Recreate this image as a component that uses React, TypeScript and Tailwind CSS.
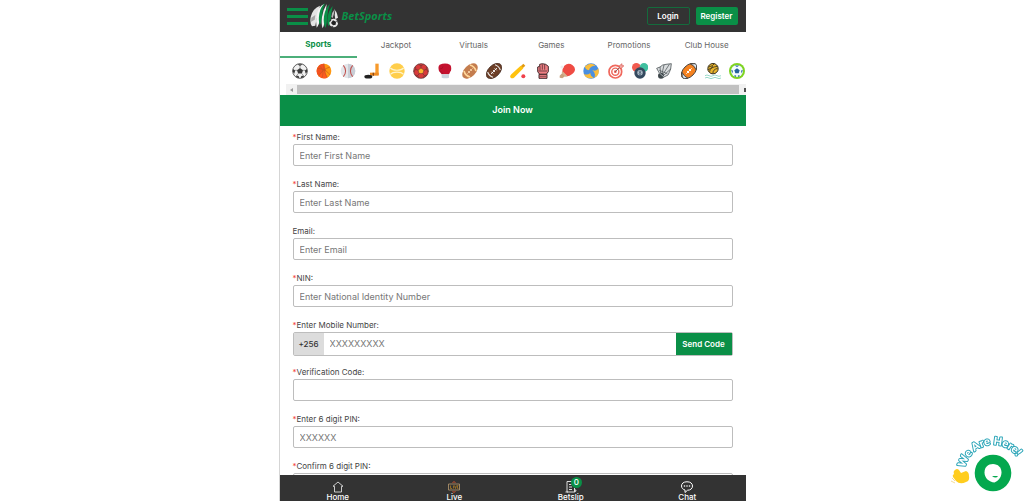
import type { ReactNode } from 'react'

const tabs = ['Sports', 'Jackpot', 'Virtuals', 'Games', 'Promotions', 'Club House']

const sports: { name: string; icon: ReactNode }[] = [
  {
    name: 'Soccer',
    icon: (
      <>
        <circle cx="12" cy="12" r="11" fill="#f1f1f1" stroke="#555" strokeWidth="1.4" />
        <path d="M12 7.5l4.5 3.2-1.7 5.1H9.2l-1.7-5.1z" fill="#3a3a3a" />
        <path d="M8 1.8h8l-4 2.8zM1.4 9l3.4 2.2L3.4 16 1.2 13zM22.6 9l-3.4 2.2 1.4 4.8 2.2-3zM6 18.6l4 .8.8 3.4-4.2-1.6zM18 18.6l-4 .8-.8 3.4 4.2-1.6z" fill="#3a3a3a" />
        <path d="M12 4v4M4.5 11l3.2 0M19.5 11h-3.2M9.2 15.8L7.2 19M14.8 15.8l2 3.2" stroke="#777" strokeWidth="1" />
      </>
    ),
  },
  {
    name: 'Basketball',
    icon: (
      <>
        <circle cx="12" cy="12" r="11" fill="#ff9811" />
        <path d="M12 1a11 11 0 0 0-8 18.6L15 12z" fill="#f4511e" />
        <path d="M4 19.6A11 11 0 0 0 17 22L13 11z" fill="#ff5a1f" />
        <path d="M2 8c8 0 15 4 19 10M12 1c-1 8 1 15 5 21M21 6C14 8 7 13 4 20M5 4c5 4 7 10 4 18" fill="none" stroke="#c2571f" strokeWidth="1" />
      </>
    ),
  },
  {
    name: 'Baseball',
    icon: (
      <>
        <circle cx="12" cy="12" r="11" fill="#e4e6ea" />
        <path d="M12 1a11 11 0 0 1 0 22z" fill="#c9ced6" />
        <path d="M5 3.5c4.5 5 4.5 12 0 17M19 3.5c-4.5 5-4.5 12 0 17" fill="none" stroke="#c0504d" strokeWidth="1.6" />
      </>
    ),
  },
  {
    name: 'Ice Hockey',
    icon: (
      <>
        <path d="M17 1h5v17h-5z" fill="#f79a2b" />
        <path d="M9 14.5h13v4.5H9z" fill="#f08c22" />
        <path d="M13 14.5h2v4.5h-2z" fill="#8a4b1c" />
        <ellipse cx="6.5" cy="20.5" rx="6" ry="2.8" fill="#222" />
      </>
    ),
  },
  {
    name: 'Tennis',
    icon: (
      <>
        <circle cx="12" cy="12" r="11.5" fill="#ffce4b" />
        <path d="M2 7.5c4 4.5 16 4.5 20 0M2 17c4-4.5 16-4.5 20 0" fill="none" stroke="#fff3c9" strokeWidth="1.8" />
      </>
    ),
  },
  {
    name: 'Handball',
    icon: (
      <>
        <circle cx="12" cy="12" r="11" fill="#d93a3a" stroke="#6b3434" strokeWidth="1.2" />
        <path d="M12 7.5l4.5 3.3-1.7 5H9.2l-1.7-5z" fill="#ffb52e" stroke="#6b3434" strokeWidth=".8" />
        <path d="M12 8V4L8 2M12 4l4-2M16 11l4-1.5V6M20 9.5l3 4M14.5 15.6L17 19l4-1M17 19l-2 4M9.5 15.6L7 19l-4-1M7 19l2 4M8 11L4 9.5V6M4 9.5l-3 4" fill="none" stroke="#6b3434" strokeWidth="1" />
      </>
    ),
  },
  {
    name: 'Boxing',
    icon: (
      <>
        <path d="M4 2.5Q13-1 20 3q2 3 1 8l-3 6H7L3 12Q1 5 4 2.5z" fill="#c4122f" />
        <path d="M4 9q5 0 5-4M9 17q-1-4-5-5" fill="none" stroke="#9e0f28" strokeWidth="1" />
        <path d="M7 17h11v5q-5 2-11 0z" fill="#ccd3dd" />
      </>
    ),
  },
  {
    name: 'Rugby',
    icon: (
      <>
        <ellipse cx="12" cy="12" rx="14" ry="8.5" transform="rotate(-45 12 12)" fill="#c47d4e" />
        <path d="M3 12q2 7 9 9M12 3q7 2 9 9" fill="none" stroke="#ffd79a" strokeWidth="2.6" />
        <path d="M8 16l8-8M9 12l3 3M12 9l3 3" stroke="#f6d3a8" strokeWidth="1.3" />
      </>
    ),
  },
  {
    name: 'American Football',
    icon: (
      <>
        <ellipse cx="12" cy="12" rx="14" ry="8.5" transform="rotate(-45 12 12)" fill="#6d3f27" stroke="#3b2419" />
        <path d="M2.5 13.5q2 6 8 8M13.5 2.5q6 2 8 8" fill="none" stroke="#eee" strokeWidth="1.6" />
        <path d="M7.5 16.5l9-9M8 13l3 3M10.5 10.5l3 3M13 8l3 3" stroke="#fff" strokeWidth="1.3" />
      </>
    ),
  },
  {
    name: 'Cricket',
    icon: (
      <>
        <path d="M20 1l3 3-4 4-3-3z" fill="#e39b12" />
        <path d="M16 4l4 4L6 22q-3 2-5 0t1-5z" fill="#ffc20e" />
        <circle cx="20" cy="20" r="3" fill="#f0414b" />
      </>
    ),
  },
  {
    name: 'Martial Arts',
    icon: (
      <>
        <path d="M4 6l3-1V2l4-1 5 1 4 3v8l-3 4H7l-3-4z" fill="#ee7f84" stroke="#3b2226" strokeWidth="1.4" />
        <path d="M7.5 5v6M11 2v8M14.5 2v8M5 12h13" stroke="#3b2226" strokeWidth="1" />
        <path d="M6 17h12v6H6z" fill="#ee7f84" stroke="#3b2226" strokeWidth="1.4" />
        <path d="M7 20h10" stroke="#3b2226" strokeWidth=".8" />
      </>
    ),
  },
  {
    name: 'Table Tennis',
    icon: (
      <>
        <path d="M5 15l5 4-5 4-4-1v-3z" fill="#c9a27e" />
        <path d="M8 4Q14-1 20 3t3 10q-3 5-11 7l-7-7Q5 8 8 4z" fill="#ef4b43" />
        <path d="M5 12l8 8-3 1-6-6z" fill="#d5b18e" />
        <circle cx="4.5" cy="6" r="2.3" fill="#eee" />
      </>
    ),
  },
  {
    name: 'Volleyball',
    icon: (
      <>
        <circle cx="12" cy="12" r="11.5" fill="#4a8fe0" />
        <path d="M3 5Q11-2 19 4q-9 0-10 7-6-1-6-6zM23 8q3 10-6 14 3-7-3-11 7 2 9-3zM1 16q5 3 10-1 0 5 5 7Q5 25 1 16z" fill="#f9bd3c" />
      </>
    ),
  },
  {
    name: 'Darts',
    icon: (
      <>
        <circle cx="11" cy="13" r="9.5" fill="#fff" stroke="#f0685d" strokeWidth="2.6" />
        <circle cx="11" cy="13" r="5.3" fill="#fff" stroke="#f0685d" strokeWidth="2.2" />
        <circle cx="11" cy="13" r="2" fill="#ee5a4f" />
        <path d="M11 13l8-8" stroke="#555" strokeWidth="1.2" />
        <path d="M17 4l4-3v3h3l-4 4h-3z" fill="#f3a39d" stroke="#d2463c" strokeWidth=".8" />
      </>
    ),
  },
  {
    name: 'Pool',
    icon: (
      <>
        <circle cx="6.5" cy="6.5" r="6.5" fill="#f15b50" />
        <circle cx="18" cy="6.5" r="6.5" fill="#40c0a0" />
        <circle cx="12" cy="15" r="8.5" fill="#34495e" />
        <circle cx="12" cy="14.5" r="4" fill="#b9c6d2" />
        <circle cx="12" cy="13" r="1.3" fill="none" stroke="#34495e" />
        <circle cx="12" cy="16" r="1.5" fill="none" stroke="#34495e" />
      </>
    ),
  },
  {
    name: 'Badminton',
    icon: (
      <>
        <path d="M5 15L1 8l5-2 4-3 5-1 8-1-1 8-2 5-2 4-8 4z" fill="#dadddf" stroke="#4b5356" strokeWidth="1.2" />
        <path d="M7 17L6 6M9 16l3-13M11 16l9-14M12 18l10-9M5 11l12 5" stroke="#4b5356" strokeWidth="1.1" />
        <circle cx="7.5" cy="19" r="4.5" fill="#3f484c" />
        <path d="M4 14l8 7" stroke="#aab2b5" strokeWidth="1.5" />
      </>
    ),
  },
  {
    name: 'Rugby League',
    icon: (
      <>
        <ellipse cx="12" cy="12" rx="14" ry="8.5" transform="rotate(-45 12 12)" fill="#f58220" stroke="#3b3b3b" strokeWidth="1.3" />
        <path d="M1.5 14q3 6 8.5 8.5l-5 1-3-2zM14 1.5q6 2 8.5 8.5l1-6-2-3z" fill="#d8e4ee" stroke="#3b3b3b" strokeWidth="1.2" />
        <path d="M8 16l8-8M9 12l3 3M12 9l3 3" stroke="#fff" strokeWidth="1.5" />
      </>
    ),
  },
  {
    name: 'Water Polo',
    icon: (
      <>
        <circle cx="12" cy="8.5" r="7.8" fill="#e9b52c" stroke="#3a3420" strokeWidth="1.5" />
        <path d="M5 6q7-1 9-5M7 13q0-7 12-8M12 16q-1-6 7-8M4 10q5-1 8-5" fill="none" stroke="#3a3420" strokeWidth="1.3" />
        <path d="M0 19q3-2 6 0t6 0 6 0 6 0M0 22.5q3-2 6 0t6 0 6 0 6 0" fill="none" stroke="#9adbc9" strokeWidth="1.5" />
      </>
    ),
  },
  {
    name: 'Futsal',
    icon: (
      <>
        <circle cx="12" cy="12" r="12" fill="#7ed321" />
        <circle cx="12" cy="12" r="9" fill="#f3fbff" />
        <path d="M12 8l4 2.8-1.5 4.7h-5L8 10.8z" fill="#24639c" />
        <path d="M8.5 3.6h7L12 6zM3.3 10L6 11.8l-1.2 4zM20.7 10L18 11.8l1.2 4zM7 19.3l3.6-.8V21zM17 19.3l-3.6-.8V21z" fill="#24639c" />
      </>
    ),
  },
]

function Logo() {
  return (
    <svg viewBox="0 0 84 78" className="h-[26px] w-7" aria-hidden="true">
      <path d="M30 8Q8 16 2 42q-3 20 4 28l10-2 3-16 5-20z" fill="#e4e4e4" />
      <path d="M4 44l12-8-2 14-11 6z" fill="#a5a5a5" />
      <path d="M42 3Q26 10 21 32t-1 42q8-8 10-28T42 3z" fill="#f4f4f4" />
      <path d="M45 1Q32 10 28 32t2 34q4-6 6-28T45 1z" fill="#0a8f47" />
      <path d="M50 3Q39 20 36 42t2 34q6-12 8-34T50 3z" fill="#eee" />
      <path d="M59 3Q45 18 42 40t5 35q4-14 5-34t7-38z" fill="#0a8f47" />
      <path d="M68 9Q56 22 53 42t4 28q5-12 6-28t5-33z" fill="#0a8f47" />
      <path d="M75 17Q65 28 64 42l4 3q4-12 7-28z" fill="#bbb" />
      <path d="M76 22q6 8 8 22l-8 5q-4-12 0-27z" fill="#e8e8e8" />
      <circle cx="71" cy="60" r="13" fill="#e6e6e6" />
      <path d="M69 52l9 4-1 9-8 2-6-7zM81 50l3 9-5-3zM60 69l9 1 1 3zM58 54l4-4 2 2-5 6z" fill="#222" />
    </svg>
  )
}

function Field({ id, label, placeholder, required = true, type = 'text' }: {
  id: string
  label: string
  placeholder?: string
  required?: boolean
  type?: string
}) {
  return (
    <div className="mb-[11px]">
      <FieldLabel id={id} label={label} required={required} />
      <input
        id={id}
        type={type}
        placeholder={placeholder}
        className="block h-[22px] w-full rounded-xs border border-[#bdbdbd] bg-white px-1.5 text-[9px] text-[#444] placeholder:text-[#777]"
      />
    </div>
  )
}

function FieldLabel({ id, label, required = true }: { id: string; label: string; required?: boolean }) {
  return (
    <label htmlFor={id} className="block text-[8px] leading-[14px] text-[#444]">
      {required && <span className="text-[#f44336]">*</span>}
      {label}
    </label>
  )
}

const navItems: { name: string; icon: ReactNode }[] = [
  {
    name: 'Home',
    icon: <path d="M2 10.5L12 2l10 8.5h-3V22H5V10.5z" fill="none" stroke="#ddd" strokeWidth="1.8" strokeLinejoin="round" />,
  },
  {
    name: 'Live',
    icon: (
      <>
        <path d="M1 6h22v12H1z" fill="none" stroke="#b99a70" strokeWidth="1.6" />
        <path d="M5 9v6h3M11 9v6M13 9l2 6 2-6M21 9h-2v6h2" fill="none" stroke="#c58a21" strokeWidth="1.3" />
        <path d="M9 3q3-3 6 0M9 21q3 3 6 0" fill="none" stroke="#d0502c" strokeWidth="2" />
      </>
    ),
  },
  {
    name: 'Betslip',
    icon: (
      <path d="M14 1H4v21h15v-8M19 22q3 0 3-4h-4M1 22h5M8 7h5M8 12h6M8 17h6" fill="none" stroke="#ddd" strokeWidth="2" />
    ),
  },
  {
    name: 'Chat',
    icon: (
      <>
        <path d="M12 1.5c7 0 11 3.5 11 8.5s-4 8.500-10 8.500L8 23v-5C4 17 1 14 1 10c0-5 4-8.500 11-8.500z" fill="none" stroke="#fff" strokeWidth="2" />
        <circle cx="7" cy="10" r="1.6" fill="#fff" />
        <circle cx="12" cy="10" r="1.6" fill="#fff" />
        <circle cx="17" cy="10" r="1.6" fill="#fff" />
      </>
    ),
  },
]

function ChatWidget() {
  return (
    <button type="button" aria-label="Open chat" className="fixed right-0 bottom-0 h-[76px] w-[84px]">
      <svg viewBox="0 0 84 76" className="h-full w-full">
        <path id="greeting" d="M25 43A29 29 0 0 1 79 35" fill="none" />
        <text fontFamily="Lato, sans-serif" fontSize="11" fontWeight="900" fill="#fff" stroke="#2ba5b8" strokeWidth="2" strokeLinejoin="round" paintOrder="stroke">
          <textPath href="#greeting">We Are Here!</textPath>
        </text>
        <path d="M15 45q2-2 4 0l2 3 5-2q3 1 3 5 1 5-3 6-6 3-10-1l-3-4q-1-2 1-3-1-3 1-4z" fill="#ffcd1f" />
        <path d="M12 53l3 3M11 56l4 2" stroke="#f5dc9a" strokeWidth="1" />
        <circle cx="53" cy="48" r="18.3" fill="#04a84e" />
        <path d="M53 39c5 0 8.5 3.5 8.5 8.5S58 56 54.5 57.5C49 57 44.5 53 44.5 47.5S48 39 53 39z" fill="#fff" />
        <path d="M52 51h6q-2 3-6 0z" fill="#04a84e" />
      </svg>
    </button>
  )
}

export default function App() {
  return (
    <div className="h-screen overflow-hidden bg-white font-['Inter',sans-serif]">
      <div className="mx-auto flex h-full max-w-[467px] flex-col border-l border-[#d5d5d5]">
        <header className="flex h-8 shrink-0 items-center bg-[#333] pr-2 pl-[7px]">
          <button type="button" aria-label="Menu" className="flex w-[21px] flex-col gap-1">
            <span className="h-[3px] bg-[#0a8f47]" />
            <span className="h-[3px] bg-[#0a8f47]" />
            <span className="h-[3px] bg-[#0a8f47]" />
          </button>
          <a href="#" className="ml-0.5 flex items-center gap-1 font-['Open_Sans',sans-serif] text-[11px] font-bold text-[#0a8f47] italic">
            <Logo />
            BetSports
          </a>
          <div className="ml-auto flex gap-1.5 text-[8px] font-semibold text-white">
            <button type="button" className="h-[18px] w-[43px] rounded-xs border border-[#146b3c]">Login</button>
            <button type="button" className="h-[18px] w-[42px] rounded-xs bg-[#0a8f47]">Register</button>
          </div>
        </header>

        <nav className="grid h-[25px] shrink-0 grid-cols-6 text-center text-[8px] text-[#666]">
          {tabs.map((tab, i) => (
            <a
              key={tab}
              href="#"
              className={i === 0 ? 'border-b-2 border-b-[#4caf7a] leading-6 font-bold text-[#0a8f47]' : 'leading-[26px]'}
            >
              {tab}
            </a>
          ))}
        </nav>

        <div className="flex h-[27px] shrink-0 items-center justify-between pl-3">
          {sports.map((sport) => (
            <a key={sport.name} href="#" aria-label={sport.name}>
              <svg viewBox="0 0 24 24" className="h-4 w-4" fill="none">{sport.icon}</svg>
            </a>
          ))}
        </div>

        <div className="ml-1.5 flex h-[11px] shrink-0 items-center bg-[#f1f1f1]">
          <svg viewBox="0 0 11 10" className="h-[10px] w-[11px]"><path d="M7 3v4L4 5z" fill="#999" /></svg>
          <div className="h-[9px] flex-1 bg-[#c1c1c1]" />
          <svg viewBox="0 0 7 10" className="h-[10px] w-[7px]"><path d="M5 3v4h2V3z" fill="#505050" /></svg>
        </div>

        <h1 className="h-[31px] shrink-0 bg-[#0a8f47] text-center text-[9px] leading-[30px] font-semibold text-white">Join Now</h1>

        <form className="min-h-0 flex-1 overflow-hidden px-[13px] pt-1">
          <Field id="first" label="First Name:" placeholder="Enter First Name" />
          <Field id="last" label="Last Name:" placeholder="Enter Last Name" />
          <Field id="email" label="Email:" placeholder="Enter Email" required={false} type="email" />
          <Field id="nin" label="NIN:" placeholder="Enter National Identity Number" />
          <div className="mb-[9px]">
            <FieldLabel id="mobile" label="Enter Mobile Number:" />
            <div className="flex h-6 rounded-xs border border-[#bdbdbd]">
              <span className="w-[30px] bg-[#dcdcdc] text-center text-[8px] leading-[22px] font-medium text-[#333]">+256</span>
              <input id="mobile" type="tel" placeholder="XXXXXXXXX" className="min-w-0 flex-1 px-1.5 text-[9px] placeholder:text-[#777]" />
              <button type="button" className="w-14 bg-[#0a8f47] text-[8px] font-semibold text-white">Send Code</button>
            </div>
          </div>
          <Field id="code" label="Verification Code:" />
          <Field id="pin" label="Enter 6 digit PIN:" placeholder="XXXXXX" type="password" />
          <Field id="confirm" label="Confirm 6 digit PIN:" placeholder="XXXXXX" type="password" />
        </form>

        <nav className="grid h-[26px] shrink-0 grid-cols-4 bg-[#333] text-[8px] font-medium text-white">
          {navItems.map((item) => (
            <a key={item.name} href="#" className="flex flex-col items-center pt-1.5">
              <span className="relative">
                <svg viewBox="0 0 24 24" className="h-3 w-3">{item.icon}</svg>
                {item.name === 'Betslip' && (
                  <span className="absolute -top-1 left-1.5 h-[11px] w-[11px] rounded-full bg-[#0a8f47] text-center text-[8px] leading-[11px]">0</span>
                )}
              </span>
              <span className="leading-[8px]">{item.name}</span>
            </a>
          ))}
        </nav>
      </div>
      <ChatWidget />
    </div>
  )
}
